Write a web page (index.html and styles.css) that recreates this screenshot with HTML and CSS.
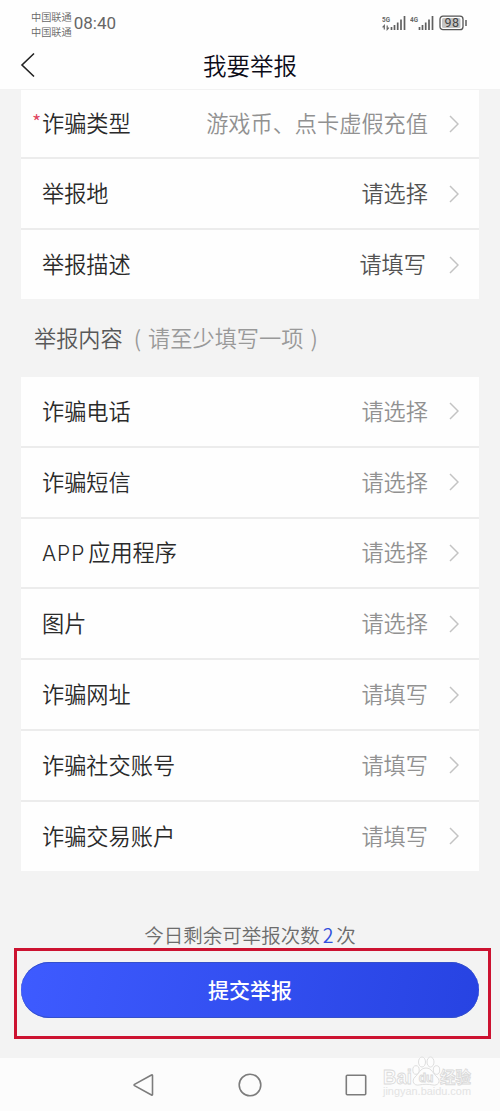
FILE: index.html
```html
<!DOCTYPE html>
<html lang="zh-CN">
<head>
<meta charset="utf-8">
<title>我要举报</title>
<link rel="stylesheet" href="styles.css">
</head>
<body>
<div class="status">
  <div class="carriers"><span>中国联通</span><span>中国联通</span></div>
  <span class="time">08:40</span>
  <div class="signals">
    <svg class="signal" width="24" height="16" viewBox="0 0 24 16">
      <text class="net" x="0" y="7" textLength="8" lengthAdjust="spacingAndGlyphs">5G</text>
      <path class="arrows" d="M2.3 14.500v-4L.6 12.300M5.200 10.500v4l1.700-1.800"/>
      <path class="bars" d="M9.500 15v-3M12.500 15v-5M15.700 15V7.500M19 15V4.500M22.500 15V1"/>
    </svg>
    <svg class="signal" width="24" height="16" viewBox="0 0 24 16">
      <text class="net" x="0" y="7" textLength="8" lengthAdjust="spacingAndGlyphs">4G</text>
      <path class="bars" d="M9.500 15v-3M12.500 15v-5M15.700 15V7.500M19 15V4.500M22.500 15V1"/>
    </svg>
    <svg class="battery" width="29" height="16" viewBox="0 0 29 16">
      <rect x="1" y="1.200" width="23" height="13.500" rx="3" fill="none" stroke="#555" stroke-width="1.300"/>
      <rect x="3" y="3" width="18.500" height="10" rx="1.500" fill="#c4c4c4"/>
      <path d="M27 5v6" stroke="#666" stroke-width="1.600"/>
      <text class="level" x="13" y="12.200" text-anchor="middle">98</text>
    </svg>
  </div>
</div>
<header class="header">
  <svg class="back" width="16" height="26" viewBox="0 0 16 26"><path d="M14 1.500 2 13l12 11.500"/></svg>
  <h1 class="title">我要举报</h1>
</header>
<main class="page">
  <section class="group group-first">
    <div class="row"><span class="label"><i class="star">*</i>诈骗类型</span><span class="value">游戏币、点卡虚假充值</span><svg class="chev" viewBox="0 0 10 18"><path d="M1 1l8 8-8 8"/></svg></div>
    <div class="row"><span class="label">举报地</span><span class="value dark">请选择</span><svg class="chev" viewBox="0 0 10 18"><path d="M1 1l8 8-8 8"/></svg></div>
    <div class="row"><span class="label">举报描述</span><span class="value dark inset">请填写</span><svg class="chev" viewBox="0 0 10 18"><path d="M1 1l8 8-8 8"/></svg></div>
  </section>
  <h2 class="section">举报内容<span class="note"><span class="open">(</span>请至少填写一项<span class="close">)</span></span></h2>
  <section class="group">
    <div class="row"><span class="label">诈骗电话</span><span class="value">请选择</span><svg class="chev" viewBox="0 0 10 18"><path d="M1 1l8 8-8 8"/></svg></div>
    <div class="row"><span class="label">诈骗短信</span><span class="value">请选择</span><svg class="chev" viewBox="0 0 10 18"><path d="M1 1l8 8-8 8"/></svg></div>
    <div class="row"><span class="label"><span class="latin">APP</span>应用程序</span><span class="value">请选择</span><svg class="chev" viewBox="0 0 10 18"><path d="M1 1l8 8-8 8"/></svg></div>
    <div class="row"><span class="label">图片</span><span class="value">请选择</span><svg class="chev" viewBox="0 0 10 18"><path d="M1 1l8 8-8 8"/></svg></div>
    <div class="row"><span class="label">诈骗网址</span><span class="value">请填写</span><svg class="chev" viewBox="0 0 10 18"><path d="M1 1l8 8-8 8"/></svg></div>
    <div class="row"><span class="label">诈骗社交账号</span><span class="value">请填写</span><svg class="chev" viewBox="0 0 10 18"><path d="M1 1l8 8-8 8"/></svg></div>
    <div class="row"><span class="label">诈骗交易账户</span><span class="value">请填写</span><svg class="chev" viewBox="0 0 10 18"><path d="M1 1l8 8-8 8"/></svg></div>
  </section>
  <p class="quota">今日剩余可举报次数<b class="count">2</b>次</p>
  <div class="frame"><button class="submit">提交举报</button></div>
</main>
<nav class="nav">
  <svg class="nav-icon" viewBox="0 0 24 24"><path d="M20.500 2.500v19q0 1-1 .5L2.500 12.600q-.8-.6 0-1.200L19.500 2q1-.5 1 .5z"/></svg>
  <svg class="nav-icon" viewBox="0 0 24 24"><circle cx="12" cy="12" r="10.800"/></svg>
  <svg class="nav-icon" viewBox="0 0 24 24"><rect x="2.300" y="2.300" width="19.400" height="19.400" rx="1"/></svg>
  <svg class="watermark" width="94" height="46" viewBox="0 0 94 46">
    <g class="mark">
      <text class="wm-brand" x="1" y="29" textLength="29" lengthAdjust="spacingAndGlyphs">Bai</text>
      <ellipse cx="34" cy="15" rx="3.200" ry="4.300"/>
      <ellipse cx="40" cy="7" rx="3.500" ry="5"/>
      <ellipse cx="48.500" cy="7" rx="3.500" ry="5"/>
      <ellipse cx="54.500" cy="15" rx="3.200" ry="4.300"/>
      <path d="M44 13c6 0 7 6 11 9 5 5 0 9-4 8-5-1-9-1-14 0-5 1-8-4-4-8 4-3 5-9 11-9z"/>
      <text class="wm-du" x="44" y="27" text-anchor="middle">du</text>
      <text class="wm-cn" x="58" y="28" textLength="31" lengthAdjust="spacingAndGlyphs">经验</text>
    </g>
    <text class="wm-url" x="1" y="40" textLength="88" lengthAdjust="spacingAndGlyphs">jingyan.baidu.com</text>
  </svg>
</nav>
</body>
</html>
```

FILE: styles.css
```css
* { box-sizing: border-box; }
body {
  margin: 0;
  width: 500px;
  height: 1111px;
  overflow: hidden;
  display: flex;
  flex-direction: column;
  background: #f3f3f3;
  color: #2a2a2a;
  font-family: "Noto Sans CJK SC", sans-serif;
  font-weight: 350;
}
.status {
  height: 47px;
  flex: none;
  display: flex;
  align-items: center;
  padding: 0 32px 0 31px;
  background: #fefefe;
}
.carriers {
  display: flex;
  flex-direction: column;
  font-size: 10.200px;
  line-height: 15px;
  color: #666;
  padding-top: 1px;
}
.time {
  margin: -1px 0 0 2px;
  font: 400 17px/20px Roboto, sans-serif;
  color: #666;
}
.signals { margin: -1px 0 0 auto; display: flex; gap: 4px; }
.battery { margin-left: 1px; }
.net { font: 700 8px Roboto, sans-serif; fill: #666; }
.arrows { fill: none; stroke: #666; stroke-width: 1.200; }
.bars { fill: none; stroke: #606060; stroke-width: 1.700; }
.level { font: 400 12.500px Roboto, sans-serif; letter-spacing: .4px; fill: #444; }
.header {
  height: 43px;
  flex: none;
  display: grid;
  grid-template-columns: 60px 1fr 60px;
  align-items: center;
  padding: 0 0 6px;
  background: #fefefe;
  border-bottom: 1px solid #f2f2f2;
}
.back { margin: 0 0 0 20px; fill: none; stroke: #222; stroke-width: 1.600; }
.title {
  margin: 0;
  text-align: center;
  font-size: 23.500px;
  line-height: 34px;
  font-weight: 350;
  color: #0c0c18;
}
.page { flex: 1; padding: 0 21px; }
.group { display: grid; grid-template-rows: repeat(6, 70.800px) 1fr; height: 494px; }
.group-first { height: 209px; grid-template-rows: 69px 71px 69px; }
.row {
  display: flex;
  align-items: center;
  padding: 0 20px 0 21px;
  background: #fefefe;
  border-bottom: 2px solid #ececec;
  font-size: 22.200px;
  line-height: 32px;
}
.row:last-child { border-bottom: 0; }
.label, .value { margin-top: -3px; }
.label { position: relative; flex: 1; }
.star {
  position: absolute;
  left: -10px;
  top: 0;
  font-style: normal;
  font-size: 20px;
  color: #e0455f;
}
.latin { font-family: Inter, sans-serif; font-size: 21px; line-height: 0; letter-spacing: .9px; margin-right: 3px; }
.value { color: #919191; }
.dark { color: #525252; }
.inset { margin-right: 2px; }
.chev {
  width: 10px;
  height: 18px;
  margin-left: 21px;
  fill: none;
  stroke: #c3c3c3;
  stroke-width: 1.500;
}
.section {
  height: 78px;
  margin: 0;
  padding: 0 0 3px 13px;
  display: flex;
  align-items: center;
  font-size: 22.200px;
  font-weight: 350;
  color: #585858;
}
.note { color: #999; }
.open { margin: 0 7px 0 11px; }
.close { margin-left: 7px; }
.quota {
  margin: 0;
  padding-top: 49px;
  height: 77px;
  text-align: center;
  font-size: 19.500px;
  line-height: 29px;
  color: #6c6c6c;
}
.count { margin: 0 3px; font-weight: 350; color: #3150dc; }
.frame {
  margin: 0 -12px 0 -7px;
  height: 91px;
  padding: 11px 8px 0 4px;
  border: 3px solid #cc1230;
}
.submit {
  display: block;
  width: 458px;
  height: 56px;
  padding: 0 0 3px;
  border: 0;
  border-radius: 28px;
  background: linear-gradient(100deg, #3e5bff, #2743e2);
  box-shadow: inset 0 1px #3450cc, inset 0 -1px #3450cc;
  color: #fff;
  font: 500 21px/52px "Noto Sans CJK SC", sans-serif;
}
.nav {
  position: relative;
  flex: none;
  height: 53px;
  display: flex;
  justify-content: center;
  align-items: center;
  gap: 82px;
  background: #fcfcfc;
}
.nav-icon { width: 24px; height: 24px; fill: none; stroke: #7c7c7c; stroke-width: 1.600; }
.watermark { position: absolute; left: 382px; top: -3px; overflow: visible; }
.mark { fill: #fdfdfd; stroke: #dadada; stroke-width: .9; }
.wm-brand { font: 700 21px "Liberation Sans", sans-serif; }
.wm-du { font: 700 12px "Liberation Sans", sans-serif; }
.wm-cn { font: 700 16px "Noto Sans CJK SC", sans-serif; }
.wm-url { font: 10px "Liberation Sans", sans-serif; fill: #e3e3e3; }
```
